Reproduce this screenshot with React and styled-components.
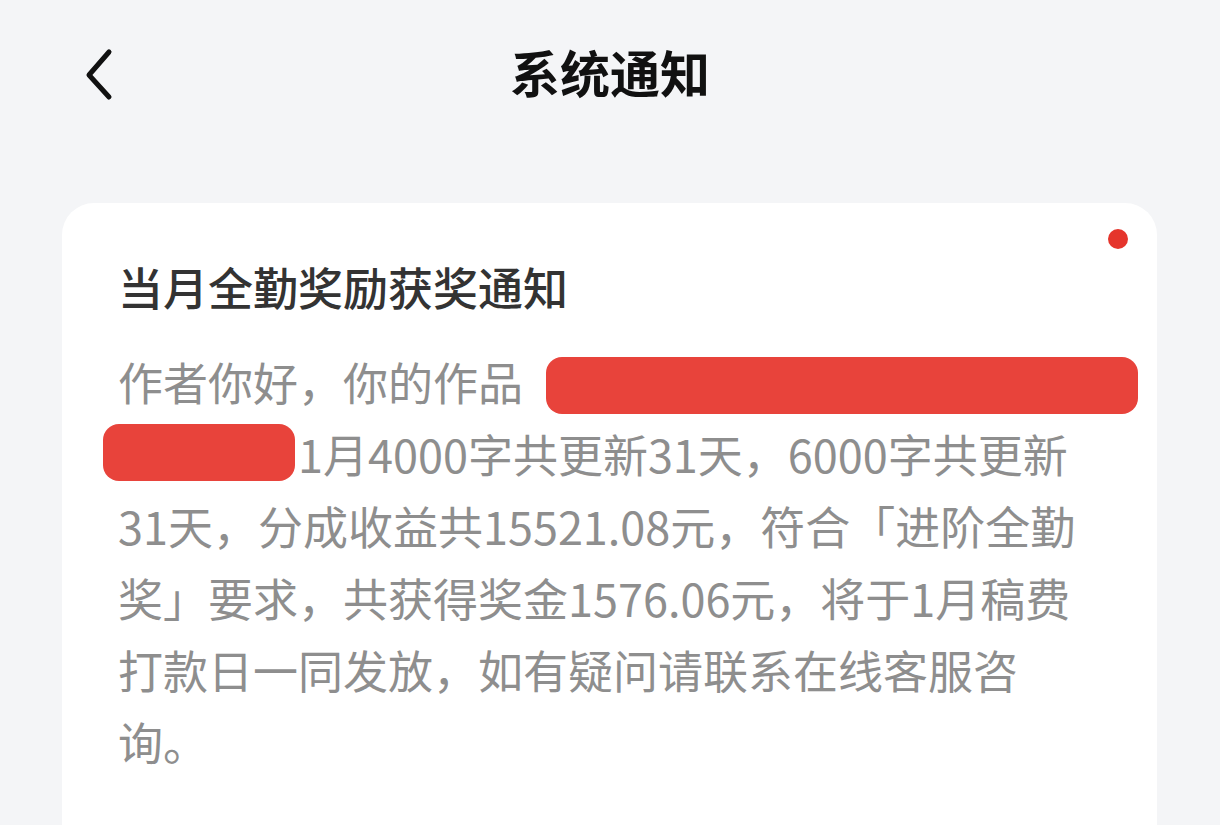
import React from 'react';
import styled, { createGlobalStyle } from 'styled-components';

const GlobalStyle = createGlobalStyle`
  html, body {
    margin: 0;
    padding: 0;
    background: #f4f5f7;
  }
  body {
    font-family: "Noto Sans CJK SC", "Noto Sans", sans-serif;
    overflow: hidden;
  }
`;

const Page = styled.div`
  width: 1220px;
  height: 825px;
  background: #f4f5f7;
  overflow: hidden;
`;

const Header = styled.header`
  position: relative;
  box-sizing: border-box;
  height: 150px;
  padding-bottom: 8px;
  display: flex;
  align-items: center;
  justify-content: center;
`;

const BackButton = styled.button`
  position: absolute;
  left: 67px;
  top: 45px;
  width: 60px;
  height: 60px;
  padding: 0;
  border: none;
  background: transparent;
  display: flex;
  align-items: center;
  justify-content: center;
`;

const Title = styled.h1`
  margin: 0;
  font-size: 50px;
  font-weight: 700;
  color: #111;
  line-height: 1;
`;

const Card = styled.section`
  position: relative;
  margin: 53px 63px 0 62px;
  padding: 57px 56px 80px;
  background: #fff;
  border-radius: 32px;
`;

const UnreadDot = styled.span`
  position: absolute;
  top: 26px;
  right: 29px;
  width: 20px;
  height: 20px;
  border-radius: 50%;
  background: #e5352c;
`;

const CardTitle = styled.h2`
  margin: 0;
  font-size: 45px;
  font-weight: 500;
  line-height: 54px;
  color: #333;
`;

const Body = styled.div`
  margin-top: 32px;
  font-size: 45px;
  line-height: 72px;
  color: #8e8e8e;
`;

const Line = styled.div`
  white-space: nowrap;
`;

const Redacted = styled.span`
  display: inline-block;
  vertical-align: ${(p) => p.$va}px;
  width: ${(p) => p.$w}px;
  height: 57px;
  margin-left: ${(p) => p.$ml || 0}px;
  margin-right: ${(p) => p.$mr || 0}px;
  border-radius: 16px;
  background: #e8433b;
`;

const App = () => (
  <Page>
    <GlobalStyle />
    <Header>
      <BackButton aria-label="返回">
        <svg width="40" height="56" viewBox="0 0 40 56" fill="none">
          <path
            d="M32 5 L12 28 L32 50"
            stroke="#111"
            strokeWidth="5"
            strokeLinecap="round"
            strokeLinejoin="round"
          />
        </svg>
      </BackButton>
      <Title>系统通知</Title>
    </Header>
    <Card>
      <UnreadDot />
      <CardTitle>当月全勤奖励获奖通知</CardTitle>
      <Body>
        <Line>
          作者你好，你的作品
          <Redacted $w={592} $ml={23} $va={-13} />
        </Line>
        <Line>
          <Redacted $w={192} $ml={-15} $mr={3} $va={-8} />
          1月4000字共更新31天，6000字共更新
        </Line>
        <Line>31天，分成收益共15521.08元，符合「进阶全勤</Line>
        <Line>奖」要求，共获得奖金1576.06元，将于1月稿费</Line>
        <Line>打款日一同发放，如有疑问请联系在线客服咨</Line>
        <Line>询。</Line>
      </Body>
    </Card>
  </Page>
);

export default App;
